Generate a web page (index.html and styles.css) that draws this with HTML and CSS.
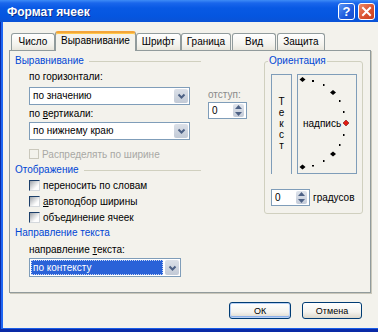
FILE: index.html
```html
<!DOCTYPE html>
<html lang="ru">
<head>
<meta charset="utf-8">
<title>Формат ячеек</title>
<link rel="stylesheet" href="styles.css">
</head>
<body>
<div class="window">
  <div class="titlebar">
    <span class="title">Формат ячеек</span>
    <div class="caption-btns">
      <span class="cbtn help">?</span>
      <span class="cbtn close"><svg width="11" height="11" viewBox="0 0 11 11"><path d="M2 2 L9 9 M9 2 L2 9" stroke="#fff" stroke-width="2" stroke-linecap="square"/></svg></span>
    </div>
  </div>
  <div class="frame">
    <div class="tabs">
      <div class="tab">Число</div>
      <div class="tab active">Выравнивание</div>
      <div class="tab">Шрифт</div>
      <div class="tab">Граница</div>
      <div class="tab gap">Вид</div>
      <div class="tab gap">Защита</div>
    </div>
    <div class="panel">
      <div class="left">
        <div class="ghead"><span>Выравнивание</span><i class="gline"></i></div>
        <div class="align-row">
          <div class="fields">
            <div class="lbl lbl-h">по горизонтали:</div>
            <div class="combo c1"><span class="cval">по значению</span><span class="dd"><svg width="9" height="6" viewBox="0 0 9 6"><path d="M1.5 1.5 L4.5 4.5 L7.5 1.5" fill="none" stroke="#4d6185" stroke-width="2"/></svg></span></div>
            <div class="lbl lbl-v">по <u>в</u>ертикали:</div>
            <div class="combo c2"><span class="cval">по нижнему краю</span><span class="dd"><svg width="9" height="6" viewBox="0 0 9 6"><path d="M1.5 1.5 L4.5 4.5 L7.5 1.5" fill="none" stroke="#4d6185" stroke-width="2"/></svg></span></div>
          </div>
          <div class="indent">
            <div class="lbl gray">отступ:</div>
            <div class="spin s-indent"><span class="sval">0</span><span class="sbtns"><svg width="7" height="4" viewBox="0 0 7 4"><path d="M0 4 L3.5 0 L7 4Z" fill="#4d6185"/></svg><svg width="7" height="4" viewBox="0 0 7 4"><path d="M0 0 L3.5 4 L7 0Z" fill="#4d6185"/></svg></span></div>
          </div>
        </div>
        <div class="chk disabled first"><i class="box"></i><span>Распределять по ширине</span></div>
        <div class="ghead g2"><span>Отображение</span><i class="gline"></i></div>
        <div class="chk c-a"><i class="box"></i><span>переносить по словам</span></div>
        <div class="chk"><i class="box"></i><span><u>а</u>втоподбор ширины</span></div>
        <div class="chk"><i class="box"></i><span>объединение ячеек</span></div>
        <div class="ghead g3"><span>Направление текста</span></div>
        <div class="lbl lbl-d">направление <u>т</u>екста:</div>
        <div class="combo c3"><span class="cval sel">по контексту</span><span class="dd"><svg width="9" height="6" viewBox="0 0 9 6"><path d="M1.5 1.5 L4.5 4.5 L7.5 1.5" fill="none" stroke="#4d6185" stroke-width="2"/></svg></span></div>
      </div>
      <fieldset class="orient">
        <legend>Ориентация</legend>
        <div class="orient-boxes">
          <div class="vtext"><span>Т</span><span>е</span><span>к</span><span>с</span><span>т</span></div>
          <div class="dial">
            <svg width="58" height="98" viewBox="0 0 58 98">
              <g fill="#000">
                <path d="M1.5 4.5 L4.5 2 L7.5 4.5 L4.5 7 Z"/>
                <path d="M32 17.5 L35 15 L38 17.5 L35 20 Z"/>
                <path d="M32 79 L35 76.5 L38 79 L35 81.5 Z"/>
                <path d="M1.5 92 L4.5 89.5 L7.5 92 L4.5 94.5 Z"/>
                <rect x="14" y="5" width="2" height="2"/>
                <rect x="25" y="9" width="1.5" height="2"/>
                <rect x="41" y="25" width="1.5" height="2"/>
                <rect x="45" y="36" width="1.5" height="2"/>
                <rect x="45" y="59" width="1.5" height="2"/>
                <rect x="41" y="69" width="1.5" height="2"/>
                <rect x="25" y="85" width="1.5" height="2"/>
                <rect x="14" y="90" width="2" height="1.5"/>
              </g>
              <path d="M45 48 L48 45 L51 48 L48 51 Z" fill="#e21b12" stroke="#7a1010" stroke-width="0.6"/>
              <text x="5" y="52" font-size="10" font-family="Liberation Sans, Arial, sans-serif" fill="#000">надпись</text>
            </svg>
          </div>
        </div>
        <div class="deg-row">
          <div class="spin s-deg"><span class="sval">0</span><span class="sbtns"><svg width="7" height="4" viewBox="0 0 7 4"><path d="M0 4 L3.5 0 L7 4Z" fill="#4d6185"/></svg><svg width="7" height="4" viewBox="0 0 7 4"><path d="M0 0 L3.5 4 L7 0Z" fill="#4d6185"/></svg></span></div>
          <span class="deg-lbl">градусов</span>
        </div>
      </fieldset>
    </div>
    <div class="btns">
      <div class="btn ok">ОК</div>
      <div class="btn cancel">Отмена</div>
    </div>
  </div>
</div>
</body>
</html>
```

FILE: styles.css
```css
* { box-sizing: border-box; }
html, body { margin: 0; padding: 0; }
body {
  width: 378px;
  height: 332px;
  overflow: hidden;
  font-family: "Liberation Sans", Arial, sans-serif;
  font-size: 10px;
  color: #000;
  background: #f3f2ec;
}
.window {
  width: 378px;
  height: 332px;
  display: flex;
  flex-direction: column;
  background: #0a2aa6;
}
.titlebar {
  flex: none;
  height: 22px;
  display: flex;
  align-items: center;
  justify-content: space-between;
  padding: 0 3px 0 7px;
  background: linear-gradient(to bottom, #3e8cf6 0, #1a66ec 3px, #0859e4 8px, #0556e0 16px, #0a52d6 22px);
}
.title {
  color: #fff;
  font-weight: bold;
  font-size: 12px;
  padding-top: 2px;
  text-shadow: 1px 1px 0 #0b2e8c;
}
.caption-btns { display: flex; gap: 3px; padding-top: 1px; }
.cbtn {
  width: 17px;
  height: 17px;
  border: 1px solid #fff;
  border-radius: 3px;
  display: flex;
  align-items: center;
  justify-content: center;
}
.help {
  background: linear-gradient(135deg, #5a95f5, #1c58dc 60%, #1a4fcc);
  color: #fff;
  font-weight: bold;
  font-size: 13px;
}
.close {
  background: linear-gradient(135deg, #ee8a66, #da5230 55%, #c8401f);
}
.frame {
  flex: 1;
  margin: 0 0 3px 1px;
  border-left: 2px solid #1e66f2;
  border-bottom: 1px solid #1a5ee8;
  background: #f3f2ec;
  display: flex;
  flex-direction: column;
  padding: 9px 7px 0 6px;
}
.tabs {
  height: 19px;
  display: flex;
  align-items: flex-end;
  padding-left: 2px;
}
.tab {
  height: 17px;
  min-width: 44px;
  padding: 0 5px;
  border: 1px solid #919b9c;
  border-bottom: 0;
  border-radius: 3px 3px 0 0;
  line-height: 16px;
  text-align: center;
  white-space: nowrap;
  background: linear-gradient(#ffffff, #f3f2ec 70%, #e8e6dc);
}
.tab.gap { margin-left: 1px; }
.tab.active {
  position: relative;
  z-index: 1;
  height: 20px;
  margin-bottom: -1px;
  border-top: 2px solid #f3a53a;
  box-shadow: inset 0 1px 0 #ffc84a;
  background: #f3f2ec;
  line-height: 16px;
}
.panel {
  flex: none;
  width: 362px;
  height: 243px;
  border: 1px solid #919b9c;
  box-shadow: 1px 1px 0 #c9c7ba;
  display: flex;
  padding: 4px 0 0 5px;
  background: #f3f2ec;
}
.left { width: 249px; flex: none; }
.ghead {
  width: 186px;
  height: 12px;
  line-height: 12px;
  display: flex;
  align-items: center;
  color: #0046d5;
  white-space: nowrap;
}
.gline { flex: 1; height: 1px; background: #d0d0bf; margin-left: 5px; }
.lbl { height: 12px; line-height: 12px; white-space: nowrap; }
.gray { color: #8a8a8a; }
.align-row { display: flex; margin-left: 14px; }
.fields { width: 161px; }
.lbl-h { margin-top: 4px; }
.lbl-v { margin-top: 3px; }
.c1 { margin-top: 4px; }
.c2 { margin-top: 2px; }
.indent { margin-left: 18px; padding-top: 22px; }
.combo {
  height: 18px;
  border: 1px solid #7f9db9;
  background: #fff;
  display: flex;
  align-items: center;
  padding: 1px 1px 1px 3px;
}
.cval { flex: 1; line-height: 14px; white-space: nowrap; }
.dd {
  width: 14px;
  height: 100%;
  border-radius: 2px;
  background: linear-gradient(#dbe0e8, #c2cad6);
  display: flex;
  align-items: center;
  justify-content: center;
}
.c3 {
  width: 152px;
  height: 19px;
  margin-left: 14px;
  margin-top: 2px;
  padding-left: 1px;
}
.cval.sel {
  height: 100%;
  margin-right: 2px;
  padding-left: 2px;
  background: #2a62d8;
  color: #fff;
  outline: 1px dotted #c9d8f5;
  outline-offset: -1px;
  line-height: 15px;
}
.spin {
  height: 17px;
  border: 1px solid #7f9db9;
  background: #fff;
  display: flex;
  align-items: center;
  padding: 1px 2px 1px 3px;
}
.s-indent { width: 39px; margin-top: 1px; }
.sval { flex: 1; line-height: 13px; }
.sbtns {
  width: 11px;
  height: 100%;
  border-radius: 2px;
  background: linear-gradient(#dfe4ec, #c3cbd8);
  display: flex;
  flex-direction: column;
  align-items: center;
  justify-content: space-around;
}
.chk {
  display: flex;
  align-items: center;
  height: 13px;
  line-height: 13px;
  margin-left: 14px;
  margin-top: 3px;
  white-space: nowrap;
}
.chk.first { margin-top: 8px; height: 12px; }
.box {
  width: 11px;
  height: 11px;
  margin-right: 3px;
  border: 1px solid;
  border-color: #1c3f6a #d4d8dc #d4d8dc #1c3f6a;
  background: linear-gradient(135deg, #9ba1a8 0, #d6d8da 40%, #fdfdfd 70%);
}
.chk.disabled { color: #a8a8a4; }
.chk.disabled .box {
  width: 10px;
  height: 10px;
  border-color: #cac8bc;
  background: #f3f2ec;
}
.g2 { margin-top: 4px; }
.c-a { margin-top: 3px; }
.g3 { margin-top: 3px; }
.lbl-d { margin-top: 5px; margin-left: 14px; }
u { text-decoration: underline; }

.orient {
  flex: none;
  width: 99px;
  height: 159px;
  margin: 0;
  padding: 7px 4px 7px 6px;
  border: 1px solid #d0d0bf;
  border-radius: 3px;
}
.orient legend {
  margin-left: -3px;
  padding: 0 1px;
  height: 12px;
  line-height: 12px;
  color: #0046d5;
}
.orient-boxes { display: flex; gap: 5px; height: 100px; }
.vtext {
  width: 21px;
  height: 100px;
  border: 1px solid #7f9db9;
  border-bottom: 0;
  display: flex;
  flex-direction: column;
  align-items: center;
  padding-top: 21px;
  line-height: 11px;
}
.dial {
  width: 60px;
  height: 100px;
  border: 1px solid #7f9db9;
}
.dial svg { display: block; }
.deg-row { display: flex; align-items: center; margin-top: 15px; }
.s-deg { width: 39px; }
.deg-lbl { margin-left: 3px; }
.btns {
  display: flex;
  justify-content: flex-end;
  gap: 11px;
  margin-top: 9px;
  padding-right: 9px;
}
.btn {
  height: 17px;
  border: 1px solid #003c74;
  border-radius: 3px;
  background: linear-gradient(#ffffff, #f4f3ee 60%, #dcd8cc);
  display: flex;
  align-items: center;
  justify-content: center;
  font-size: 9px;
}
.ok {
  width: 62px;
  box-shadow: inset 0 0 0 1px #b8d0f4, inset 0 -1px 0 1px #8cb0ea;
}
.cancel { width: 60px; }
```
